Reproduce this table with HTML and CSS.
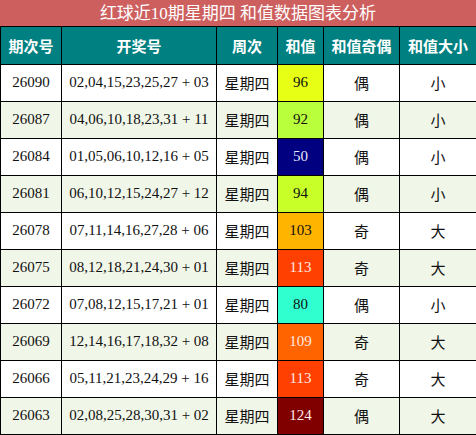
FILE: index.html
```html
<!DOCTYPE html>
<html lang="zh-CN">
<head>
    <meta charset="UTF-8">
    <title>红球近10期星期四 和值数据图表分析</title>
    <link rel="stylesheet" href="styles.css">
</head>
<body>
    <div class="chart">
        <div class="title">红球近10期星期四 和值数据图表分析</div>
        <table class="data">
            <colgroup>
                <col class="c-issue">
                <col class="c-nums">
                <col class="c-week">
                <col class="c-sum">
                <col class="c-odd">
                <col class="c-size">
            </colgroup>
            <thead>
                <tr>
                    <th>期次号</th>
                    <th>开奖号</th>
                    <th>周次</th>
                    <th>和值</th>
                    <th>和值奇偶</th>
                    <th>和值大小</th>
                </tr>
            </thead>
            <tbody>
                <tr>
                    <td>26090</td><td>02,04,15,23,25,27 + 03</td><td>星期四</td>
                    <td class="s96">96</td><td>偶</td><td>小</td>
                </tr>
                <tr>
                    <td>26087</td><td>04,06,10,18,23,31 + 11</td><td>星期四</td>
                    <td class="s92">92</td><td>偶</td><td>小</td>
                </tr>
                <tr>
                    <td>26084</td><td>01,05,06,10,12,16 + 05</td><td>星期四</td>
                    <td class="s50">50</td><td>偶</td><td>小</td>
                </tr>
                <tr>
                    <td>26081</td><td>06,10,12,15,24,27 + 12</td><td>星期四</td>
                    <td class="s94">94</td><td>偶</td><td>小</td>
                </tr>
                <tr>
                    <td>26078</td><td>07,11,14,16,27,28 + 06</td><td>星期四</td>
                    <td class="s103">103</td><td>奇</td><td>大</td>
                </tr>
                <tr>
                    <td>26075</td><td>08,12,18,21,24,30 + 01</td><td>星期四</td>
                    <td class="s113">113</td><td>奇</td><td>大</td>
                </tr>
                <tr>
                    <td>26072</td><td>07,08,12,15,17,21 + 01</td><td>星期四</td>
                    <td class="s80">80</td><td>偶</td><td>小</td>
                </tr>
                <tr>
                    <td>26069</td><td>12,14,16,17,18,32 + 08</td><td>星期四</td>
                    <td class="s109">109</td><td>奇</td><td>大</td>
                </tr>
                <tr>
                    <td>26066</td><td>05,11,21,23,24,29 + 16</td><td>星期四</td>
                    <td class="s113">113</td><td>奇</td><td>大</td>
                </tr>
                <tr>
                    <td>26063</td><td>02,08,25,28,30,31 + 02</td><td>星期四</td>
                    <td class="s124">124</td><td>偶</td><td>大</td>
                </tr>
            </tbody>
        </table>
    </div>
</body>
</html>
```

FILE: styles.css
```css
* {
    margin: 0;
    padding: 0;
    box-sizing: border-box;
}

body {
    background: #fff;
    font-family: "Liberation Serif", "Noto Sans CJK SC", serif;
    color: #111;
}

.chart {
    width: 476px;
}

.title {
    height: 27px;
    line-height: 27px;
    background: #cd5f5f;
    color: #fff;
    font-size: 17px;
    text-align: center;
    border-bottom: 1px solid #000;
}

.data {
    width: 476px;
    border-collapse: collapse;
    table-layout: fixed;
}

.c-issue { width: 61px; }
.c-nums { width: 155px; }
.c-week { width: 61px; }
.c-sum { width: 46px; }
.c-odd { width: 76px; }
.c-size { width: 77px; }

.data th,
.data td {
    border: 1px solid #000;
    text-align: center;
    white-space: nowrap;
    overflow: hidden;
}

.data tr:first-child th {
    border-top: none;
}

.data th {
    height: 37px;
    background: #008080;
    color: #fff;
    font-size: 15px;
    font-weight: bold;
}

.data td {
    height: 37px;
    font-size: 15px;
}

.data tbody tr:nth-child(even) td {
    background: #f0f6e8;
}

.data tbody tr td.s96 { background: #e6ff14; }
.data tbody tr td.s92 { background: #b9ff3c; }
.data tbody tr td.s50 { background: #000080; color: #e8e8ff; }
.data tbody tr td.s94 { background: #c8ff28; }
.data tbody tr td.s103 { background: #ffb400; }
.data tbody tr td.s113 { background: #ff4000; color: #ffe8e0; }
.data tbody tr td.s80 { background: #30ffd0; }
.data tbody tr td.s109 { background: #ff6400; color: #ffe8e0; }
.data tbody tr td.s124 { background: #800000; color: #ffe8e8; }
```
